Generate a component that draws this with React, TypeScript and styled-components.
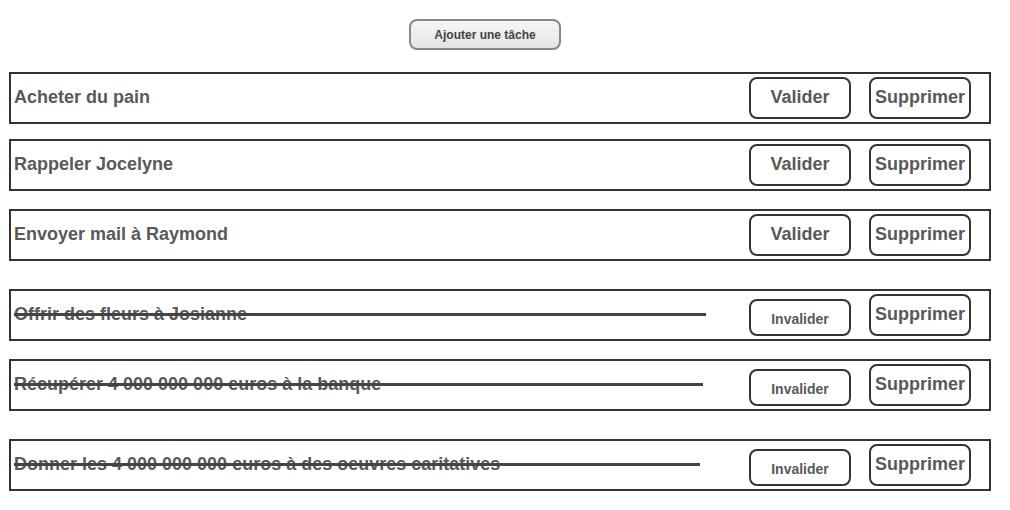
import * as React from "react";
import styled, { createGlobalStyle } from "styled-components";

const GlobalStyle = createGlobalStyle`
  body {
    margin: 0;
    background: #ffffff;
    font-family: "Liberation Sans", Arial, sans-serif;
  }
`;

const Page = styled.main`
  padding: 19px 0 0 9px;
  width: 982px;
`;

const Toolbar = styled.div`
  display: flex;
  padding-left: 400px;
  margin-bottom: 22px;
`;

const AddButton = styled.button`
  width: 152px;
  height: 31px;
  border: 2px solid #888;
  border-radius: 8px;
  background: linear-gradient(to bottom, #f6f6f6, #e4e4e4);
  font-family: "Liberation Sans", Arial, sans-serif;
  font-size: 12px;
  font-weight: bold;
  color: #444;
  padding: 0;
`;

const Row = styled.div<{ $gap: number }>`
  box-sizing: border-box;
  display: flex;
  align-items: center;
  height: 52px;
  margin-top: ${(p) => p.$gap}px;
  border: 2px solid #333;
  padding: 0 18px 0 3px;
`;

const Label = styled.div<{ $strike?: number }>`
  position: relative;
  flex: 1;
  padding-bottom: 2px;
  font-size: 18px;
  font-weight: bold;
  color: #595959;

  &::after {
    content: "";
    display: ${(p) => (p.$strike ? "block" : "none")};
    position: absolute;
    left: 0;
    top: 50%;
    margin-top: -2px;
    width: ${(p) => p.$strike || 0}px;
    height: 3px;
    background: #444;
  }
`;

const Actions = styled.div`
  display: flex;
  align-self: stretch;
  align-items: flex-end;
  gap: 18px;
  padding: 3px 0;
`;

const ActionButton = styled.button<{ $small?: boolean }>`
  box-sizing: border-box;
  width: 102px;
  height: ${(p) => (p.$small ? 37 : 42)}px;
  border: 2px solid #333;
  border-radius: 8px;
  background: #fff;
  padding: ${(p) => (p.$small ? "2px 0 0" : "0 0 2px")};
  font-family: "Liberation Sans", Arial, sans-serif;
  font-size: ${(p) => (p.$small ? 14 : 18)}px;
  font-weight: bold;
  color: #595959;
`;

type Task = { label: string; done: boolean; gap: number; strike?: number };

const tasks: Task[] = [
  { label: "Acheter du pain", done: false, gap: 0 },
  { label: "Rappeler Jocelyne", done: false, gap: 15 },
  { label: "Envoyer mail à Raymond", done: false, gap: 18 },
  { label: "Offrir des fleurs à Josianne", done: true, gap: 28, strike: 692 },
  { label: "Récupérer 4 000 000 000 euros à la banque", done: true, gap: 18, strike: 689 },
  { label: "Donner les 4 000 000 000 euros à des oeuvres caritatives", done: true, gap: 28, strike: 686 },
];

const App = () => {
  return (
    <>
      <GlobalStyle />
      <Page>
        <Toolbar>
          <AddButton>Ajouter une tâche</AddButton>
        </Toolbar>
        {tasks.map((t) => (
          <Row key={t.label} $gap={t.gap}>
            <Label $strike={t.strike}>{t.label}</Label>
            <Actions>
              <ActionButton $small={t.done}>{t.done ? "Invalider" : "Valider"}</ActionButton>
              <ActionButton>Supprimer</ActionButton>
            </Actions>
          </Row>
        ))}
      </Page>
    </>
  );
};

export default App;
